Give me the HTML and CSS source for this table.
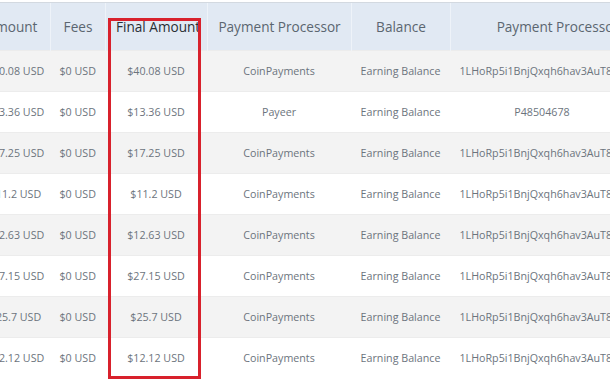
FILE: index.html
```html
<!DOCTYPE html>
<html>
<head>
<meta charset="utf-8">
<link rel="stylesheet" href="styles.css">
</head>
<body>
<div class="frame">
  <table class="tbl">
    <colgroup>
      <col class="c0"><col class="c1"><col class="c2"><col class="c3"><col class="c4"><col class="c5">
    </colgroup>
    <thead>
      <tr>
        <th>Amount</th>
        <th>Fees</th>
        <th class="dark">Final Amount</th>
        <th>Payment Processor</th>
        <th>Balance</th>
        <th class="shift">Payment Processor</th>
      </tr>
    </thead>
    <tbody>
      <tr class="odd"><td>$40.08 USD</td><td>$0 USD</td><td>$40.08 USD</td><td>CoinPayments</td><td>Earning Balance</td><td>1LHoRp5i1BnjQxqh6hav3AuT8kXbZw9m4</td></tr>
      <tr><td>$13.36 USD</td><td>$0 USD</td><td>$13.36 USD</td><td>Payeer</td><td>Earning Balance</td><td>P48504678</td></tr>
      <tr class="odd"><td>$17.25 USD</td><td>$0 USD</td><td>$17.25 USD</td><td>CoinPayments</td><td>Earning Balance</td><td>1LHoRp5i1BnjQxqh6hav3AuT8kXbZw9m4</td></tr>
      <tr><td>$11.2 USD</td><td>$0 USD</td><td>$11.2 USD</td><td>CoinPayments</td><td>Earning Balance</td><td>1LHoRp5i1BnjQxqh6hav3AuT8kXbZw9m4</td></tr>
      <tr class="odd"><td>$12.63 USD</td><td>$0 USD</td><td>$12.63 USD</td><td>CoinPayments</td><td>Earning Balance</td><td>1LHoRp5i1BnjQxqh6hav3AuT8kXbZw9m4</td></tr>
      <tr><td>$27.15 USD</td><td>$0 USD</td><td>$27.15 USD</td><td>CoinPayments</td><td>Earning Balance</td><td>1LHoRp5i1BnjQxqh6hav3AuT8kXbZw9m4</td></tr>
      <tr class="odd"><td>$25.7 USD</td><td>$0 USD</td><td>$25.7 USD</td><td>CoinPayments</td><td>Earning Balance</td><td>1LHoRp5i1BnjQxqh6hav3AuT8kXbZw9m4</td></tr>
      <tr><td>$12.12 USD</td><td>$0 USD</td><td>$12.12 USD</td><td>CoinPayments</td><td>Earning Balance</td><td>1LHoRp5i1BnjQxqh6hav3AuT8kXbZw9m4</td></tr>
    </tbody>
  </table>
  <div class="highlight"></div>
</div>
</body>
</html>
```
FILE: styles.css
```css
html, body {
  margin: 0;
  padding: 0;
  background: #ffffff;
}
.frame {
  position: relative;
  width: 610px;
  height: 380px;
  overflow: hidden;
  padding-top: 2px;
  box-sizing: border-box;
  font-family: "Open Sans", "Noto Sans", sans-serif;
}
.tbl {
  margin-left: -27px;
  border-collapse: collapse;
  table-layout: fixed;
  width: 661px;
}
.c0 { width: 77px; }
.c1 { width: 55px; }
.c2 { width: 102px; }
.c3 { width: 144px; }
.c4 { width: 99px; }
.c5 { width: 184px; }
.tbl th {
  height: 48px;
  padding: 0 10px;
  background: #e1e9f3;
  border-top: 1px solid #d3d9e0;
  border-left: 1px solid #eef3f9;
  color: #5b6670;
  font-weight: 400;
  font-size: 13.6px;
  text-align: center;
  white-space: nowrap;
  box-sizing: border-box;
}
.tbl th.dark { color: #2a2f35; }
.tbl th.shift { padding-left: 40px; }
.tbl td {
  height: 41px;
  padding: 0 10px 0 9px;
  border-top: 1px solid #ececec;
  color: #6c747d;
  font-size: 10.7px;
  text-align: center;
  white-space: nowrap;
  box-sizing: border-box;
}
.tbl td:first-child {
  padding-left: 11px;
  padding-right: 4px;
}
.tbl tr.odd td { background: #f3f3f3; }
.highlight {
  position: absolute;
  left: 108px;
  top: 18px;
  width: 93px;
  height: 361px;
  border: 3px solid #d8212c;
  box-sizing: border-box;
}
```
